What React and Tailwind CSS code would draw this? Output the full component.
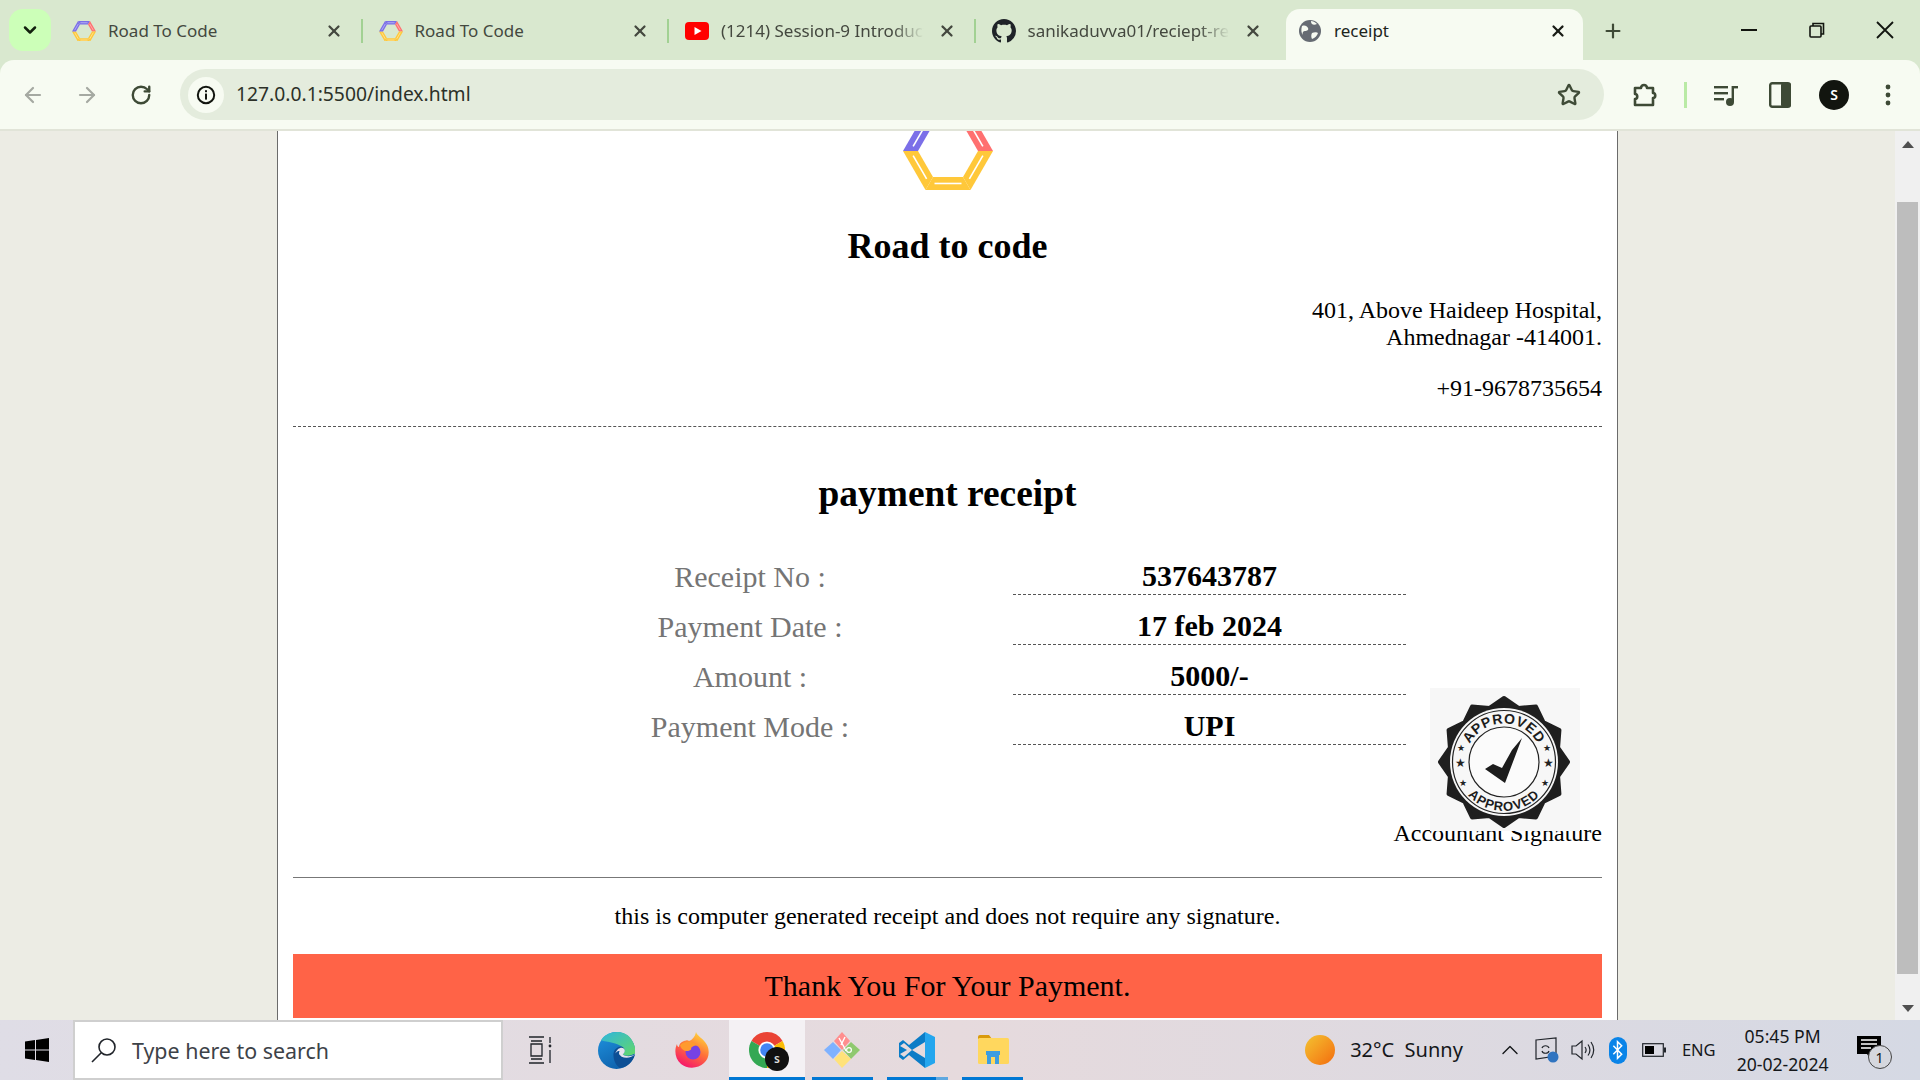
import { ArrowLeft, ArrowRight, RotateCw, Star, X, Plus, ChevronDown, ChevronUp } from 'lucide-react';

const UI = "font-['Noto_Sans',sans-serif]";

function HexLogo({ size = 90 }) {
  // flat-top hexagon split in six bars, with a thin white line in every bar
  const cx = 45, cy = 39, R = 45, r = 30, m = 37.5;
  const pt = (rad, i) => [cx + rad * Math.cos((i * Math.PI) / 3 - (2 * Math.PI) / 3), cy + rad * Math.sin((i * Math.PI) / 3 - (2 * Math.PI) / 3)];
  const colors = ['#7b6fe8', '#ff7070', '#ffc83a', '#ffc83a', '#ffc83a', '#7b6fe8'];
  return (
    <svg width={size} height={(size * 78) / 90} viewBox="0 0 90 78" className="block">
      {colors.map((c, i) => {
        const a = pt(R, i), b = pt(R, i + 1), d = pt(r, i), e = pt(r, i + 1);
        const l1 = pt(m, i), l2 = pt(m, i + 1);
        const t = 0.14;
        return (
          <g key={i}>
            <polygon points={`${a} ${b} ${e} ${d}`} fill={c} />
            <line
              x1={l1[0] + (l2[0] - l1[0]) * t}
              y1={l1[1] + (l2[1] - l1[1]) * t}
              x2={l2[0] - (l2[0] - l1[0]) * t}
              y2={l2[1] - (l2[1] - l1[1]) * t}
              stroke="#fff"
              strokeWidth="1.6"
            />
          </g>
        );
      })}
    </svg>
  );
}

function Youtube() {
  return (
    <svg width="24" height="24" viewBox="0 0 24 24">
      <rect x="0" y="3" width="24" height="18" rx="4" fill="#f00" />
      <polygon points="9.5,8 16.5,12 9.5,16" fill="#fff" />
    </svg>
  );
}

function Github() {
  return (
    <svg width="24" height="24" viewBox="0 0 16 16" fill="#1f2328">
      <path d="M8 0C3.58 0 0 3.58 0 8c0 3.54 2.29 6.53 5.47 7.59.4.07.55-.17.55-.38 0-.19-.01-.82-.01-1.49-2.01.37-2.53-.49-2.69-.94-.09-.23-.48-.94-.82-1.13-.28-.15-.68-.52-.01-.53.63-.01 1.08.58 1.23.82.72 1.21 1.87.87 2.33.66.07-.52.28-.87.51-1.07-1.78-.2-3.64-.89-3.64-3.95 0-.87.31-1.59.82-2.15-.08-.2-.36-1.02.08-2.12 0 0 .67-.21 2.2.82.64-.18 1.32-.27 2-.27s1.36.09 2 .27c1.53-1.04 2.2-.82 2.2-.82.44 1.1.16 1.92.08 2.12.51.56.82 1.27.82 2.15 0 3.07-1.87 3.75-3.65 3.95.29.25.54.73.54 1.48 0 1.07-.01 1.93-.01 2.2 0 .21.15.46.55.38A8 8 0 0 0 16 8c0-4.42-3.58-8-8-8z" />
    </svg>
  );
}

function Globe() {
  return (
    <svg width="22" height="22" viewBox="0 0 22 22">
      <circle cx="11" cy="11" r="11" fill="#666b73" />
      <path d="M3 6c3-1 5 0 6 2s-1 3-3 3-3 2-2 4c-2-2-2-6-1-9zM13 13c2-1 5-1 6 0-1 3-3 5-6 6-1-2-1-4 0-6zM12 1c2 0 4 1 6 3-2 1-4 1-5 0s-1-2-1-3z" fill="#f7fbf2" />
    </svg>
  );
}

const tabs = [
  { title: 'Road To Code', icon: <HexLogo size={24} />, first: true },
  { title: 'Road To Code', icon: <HexLogo size={24} /> },
  { title: '(1214) Session-9 Introduction to JavaScript', icon: <Youtube />, fade: true },
  { title: 'sanikaduvva01/reciept-receipt', icon: <Github />, fade: true },
];

function Tab({ title, icon, fade, first }) {
  return (
    <div className="relative flex h-[44px] w-[306.5px] items-center pl-[18px] pr-[18px]">
      {!first && <div className="absolute left-0 top-[10px] h-[24px] w-[2px] bg-[#a2d193]" />}
      <div className="flex w-[24px] justify-center">{icon}</div>
      <div
        className={`ml-[12px] min-w-0 flex-1 overflow-hidden whitespace-nowrap text-[17px] text-[#44483f] ${fade ? '[mask-image:linear-gradient(to_right,black_82%,transparent_97%)]' : ''}`}
      >
        {title}
      </div>
      <X size={18} strokeWidth={3} className="ml-[8px] shrink-0 text-[#44483f]" />
    </div>
  );
}

function TabStrip() {
  return (
    <div className={`flex h-[60px] items-start bg-[#d9e8cf] pl-[9px] pt-[9px] ${UI}`}>
      <div className="flex h-[42px] w-[42px] items-center justify-center rounded-[14px] bg-[#ccffb8]">
        <ChevronDown size={20} strokeWidth={3} className="text-[#12200e]" />
      </div>
      <div className="ml-[3px] flex">
        {tabs.map((t, i) => (
          <Tab key={i} {...t} />
        ))}
      </div>
      <div className="ml-[6px] h-[51px] w-[297px] rounded-t-[14px] bg-[#f7fbf2] pl-[13px] pr-[16px]">
        <div className="flex h-[44px] items-center">
          <Globe />
          <div className="ml-[13px] flex-1 text-[17px] text-[#20241c]">receipt</div>
          <X size={18} strokeWidth={3} className="text-[#191c16]" />
        </div>
      </div>
      <Plus size={22} strokeWidth={2.4} className="ml-[19px] mt-[11px] text-[#3e4a36]" />
      <div className="ml-auto flex h-[42px] items-center">
        <svg width="16" height="16" viewBox="0 0 16 16" className="mr-[52px]"><rect x="0" y="7" width="16" height="2" fill="#12150f" /></svg>
        <svg width="16" height="16" viewBox="0 0 16 16" fill="none" stroke="#12150f" strokeWidth="1.6" className="mr-[50px]">
          <rect x="1" y="4" width="11" height="11" rx="1" />
          <path d="M4 4V1.5h10.5V12H12" />
        </svg>
        <svg width="20" height="20" viewBox="0 0 20 20" stroke="#12150f" strokeWidth="1.8" className="mr-[25px]">
          <path d="M2 2l16 16M18 2L2 18" />
        </svg>
      </div>
    </div>
  );
}

function Toolbar() {
  return (
    <div className={`flex h-[71px] shrink-0 bg-[#d9e8cf] ${UI}`}>
      <div className="flex h-full w-full items-start rounded-t-[14px] border-b-2 border-[#e1e4d8] bg-[#f7fbf2] pt-[9px]">
        <div className="flex h-[51px] w-[180px] items-center">
          <ArrowLeft size={24} strokeWidth={2.2} className="ml-[21px] text-[#a5a9a2]" />
          <ArrowRight size={24} strokeWidth={2.2} className="ml-[30px] text-[#a5a9a2]" />
          <RotateCw size={22} strokeWidth={2.6} className="ml-[31px] text-[#3e4a36]" />
        </div>
        <div className="flex h-[51px] w-[1424px] items-center rounded-full bg-[#e4ecdd] pl-[8px] pr-[23px]">
          <div className="flex h-[36px] w-[36px] items-center justify-center rounded-full bg-[#f7fbf2]">
            <svg width="20" height="20" viewBox="0 0 20 20">
              <circle cx="10" cy="10" r="8.2" fill="none" stroke="#12150f" strokeWidth="2" />
              <rect x="9" y="8.6" width="2" height="6" fill="#12150f" />
              <rect x="9" y="5.2" width="2" height="2" fill="#12150f" />
            </svg>
          </div>
          <div className="ml-[12px] flex-1 text-[19.3px] text-[#2c3128]">127.0.0.1:5500/index.html</div>
          <Star size={24} strokeWidth={2.4} className="text-[#3e4a36]" />
        </div>
        <div className="flex h-[51px] flex-1 items-center text-[#3e4a36]">
          <svg width="24" height="26" viewBox="0 0 24 26" fill="none" stroke="#3e4a36" strokeWidth="2.6" strokeLinejoin="round" className="ml-[29px]">
            <path d="M2 6h6c0-4 6-4 6 0h6v5c3 0 3 5 0 5v7H2v-6c3 0 3-5 0-5z" />
          </svg>
          <div className="ml-[27px] h-[26px] w-[3px] bg-[#b9eaa5]" />
          <svg width="24" height="24" viewBox="0 0 24 24" fill="#3e4a36" className="ml-[27px]">
            <rect x="0" y="3" width="14" height="2.4" />
            <rect x="0" y="9" width="14" height="2.4" />
            <rect x="0" y="15" width="10" height="2.4" />
            <rect x="18" y="3" width="6" height="2.4" />
            <rect x="17.6" y="3" width="2.4" height="16" />
            <circle cx="16" cy="19" r="4" />
          </svg>
          <svg width="22" height="26" viewBox="0 0 22 26" className="ml-[31px]">
            <rect x="1.2" y="1.2" width="19.6" height="23.6" rx="2" fill="none" stroke="#3e4a36" strokeWidth="2.4" />
            <rect x="12" y="1" width="10" height="24" rx="2" fill="#3e4a36" />
          </svg>
          <div className="ml-[28px] flex h-[30px] w-[30px] items-center justify-center rounded-full bg-[#12150f] text-[14px] font-semibold text-white">S</div>
          <svg width="6" height="24" viewBox="0 0 6 24" fill="#3e4a36" className="ml-[36px]">
            <circle cx="3" cy="4" r="2.4" />
            <circle cx="3" cy="12" r="2.4" />
            <circle cx="3" cy="20" r="2.4" />
          </svg>
        </div>
      </div>
    </div>
  );
}

function Stamp() {
  const cx = 74, cy = 74;
  const lobes = 12;
  const scallop = Array.from({ length: lobes * 2 }, (_, i) => {
    const rad = i % 2 === 0 ? 64 : 56;
    const a = (i * Math.PI) / lobes - Math.PI / 2;
    return `${cx + rad * Math.cos(a)},${cy + rad * Math.sin(a)}`;
  }).join(' ');
  const stars = [[-43, -13, 6], [-44, 2, 9], [-41, 22, 6], [43, -13, 6], [44, 2, 9], [41, 22, 6]];
  return (
    <svg width="150" height="143" viewBox="0 0 150 143" className="block bg-[#f7f7f7] font-['Liberation_Sans',sans-serif]">
      <polygon points={scallop} fill="#1f1f1f" stroke="#1f1f1f" strokeWidth="4" strokeLinejoin="round" />
      <circle cx={cx} cy={cy} r="54" fill="#f7f7f7" />
      <circle cx={cx} cy={cy} r="51.5" fill="none" stroke="#222" strokeWidth="1.2" />
      <circle cx={cx} cy={cy} r="35" fill="#fbfbfb" stroke="#222" strokeWidth="1.2" />
      <path id="stamp-top" d="M 35.5 74 A 38.5 38.5 0 0 1 112.5 74" fill="none" />
      <path id="stamp-bottom" d="M 25 74 A 49 49 0 0 0 123 74" fill="none" />
      <text fontSize="14" fontWeight="700" fill="#1c1c1c" letterSpacing="0.6">
        <textPath href="#stamp-top" startOffset="50%" textAnchor="middle">APPROVED</textPath>
      </text>
      <text fontSize="13" fontWeight="700" fill="#1c1c1c" letterSpacing="1">
        <textPath href="#stamp-bottom" startOffset="50%" textAnchor="middle">APPROVED</textPath>
      </text>
      {stars.map(([dx, dy, s], i) => (
        <text key={i} x={cx + dx} y={cy + dy + s * 0.36} fontSize={s + 3} textAnchor="middle" fill="#222">★</text>
      ))}
      <polygon points="92,50 75,95 55,81 63,76 72,80 82,62" fill="#1c1c1c" />
    </svg>
  );
}

const rows = [
  ['Receipt No :', '537643787'],
  ['Payment Date :', '17 feb 2024'],
  ['Amount :', '5000/-'],
  ['Payment Mode :', 'UPI'],
];

function Receipt() {
  return (
    <div className="h-[889px] w-[1341px] shrink-0 overflow-hidden border-x border-[#6b6b6b] bg-white px-[15px] font-['Liberation_Serif',serif] text-black">
      <div className="-mt-[19px] flex justify-center">
        <HexLogo size={90} />
      </div>
      <h1 className="mt-[36px] text-center text-[36px] font-bold leading-[40px]">Road to code</h1>
      <div className="mt-[31px] text-right text-[24px] leading-[27px]">
        401, Above Haideep Hospital,<br />Ahmednagar -414001.
      </div>
      <div className="mt-[24px] text-right text-[24px] leading-[27px]">+91-9678735654</div>
      <div className="mt-[24px] border-t border-dashed border-[#555]" />
      <h2 className="mt-[44px] text-center text-[37.4px] font-bold leading-[46px]">payment receipt</h2>

      <div className="relative mt-[28px]">
        {rows.map(([label, value]) => (
          <div key={label} className="ml-[307px] flex h-[50px]">
            <div className="flex w-[300px] items-center justify-center pt-[12px] text-[30px] text-[#757575]">{label}</div>
            <div className="ml-[113px] flex w-[393px] items-center justify-center border-b border-dashed border-[#555] pt-[12px] text-[30px] font-bold">{value}</div>
          </div>
        ))}
        <div className="mt-[75px] text-right text-[24px] leading-[27px]">Accountant Signature</div>
        <div className="absolute right-[22px] top-[143px]">
          <Stamp />
        </div>
      </div>

      <div className="mt-[30px] border-t border-[#777]" />
      <div className="mt-[25px] text-center text-[24px] leading-[27px]">this is computer generated receipt and does not require any signature.</div>
      <div className="mt-[24px] flex h-[64px] items-center justify-center bg-[#ff6347] pb-[2px] text-[30px]">Thank You For Your Payment.</div>
    </div>
  );
}

function Scrollbar() {
  return (
    <div className="flex w-[25px] shrink-0 flex-col bg-[#f0f0f0]">
      <div className="flex h-[26px] items-center justify-center">
        <div className="h-0 w-0 border-x-[6px] border-b-[7px] border-x-transparent border-b-[#505050]" />
      </div>
      <div className="ml-[2px] mt-[45px] h-[772px] w-[21px] bg-[#bdbdbd]" />
      <div className="mt-auto flex h-[24px] items-center justify-center">
        <div className="h-0 w-0 border-x-[6px] border-t-[7px] border-x-transparent border-t-[#505050]" />
      </div>
    </div>
  );
}

function Edge() {
  return (
    <svg width="37" height="37" viewBox="0 0 36 36">
      <defs>
        <linearGradient id="edge-a" x1="0" y1="0" x2="0.5" y2="1"><stop offset="0" stopColor="#1f94e0" /><stop offset="1" stopColor="#0f62ad" /></linearGradient>
        <linearGradient id="edge-b" x1="0" y1="0" x2="1" y2="1"><stop offset="0" stopColor="#2fb6dc" /><stop offset="1" stopColor="#63d868" /></linearGradient>
      </defs>
      <circle cx="18" cy="18" r="18" fill="url(#edge-a)" />
      <path d="M3 8C9-2 27-3 33 8c3 5 4 10 3 13-3 2-9 3-12 1 2-2 2-5 0-7-5-5-15-5-21-7z" fill="url(#edge-b)" />
      <path d="M15 22c0-5 4-8 8-8 3 1 4 5 1 8 3 3 8 2 12 0-2 8-9 13-15 13-4-3-6-8-6-13z" fill="#0d4f95" />
      <path d="M17 21c1-5 6-7 8-5 2 2 1 4-1 6 3 2 8 2 12 0-3 3-9 4-13 2-3-2-3-4-2-5-1-1-3 0-4 2z" fill="#e6e3ec" />
    </svg>
  );
}

function Firefox() {
  return (
    <svg width="36" height="36" viewBox="0 0 36 36">
      <defs>
        <linearGradient id="ff-a" x1="0.8" y1="0" x2="0.3" y2="1"><stop offset="0" stopColor="#ffde3a" /><stop offset="0.5" stopColor="#ff7139" /><stop offset="1" stopColor="#f5156c" /></linearGradient>
      </defs>
      <path d="M22 0c1 4 7 6 11 13 3 6 2 14-3 18-6 6-17 6-23 1C1 27 0 18 3 12c0 2 1 3 2 3 0-3 2-5 5-6 3-1 4-1 5 0 3-1 6-4 7-9z" fill="url(#ff-a)" />
      <circle cx="19" cy="20" r="7.5" fill="#7542e5" />
      <path d="M6 13c5-5 14-4 19 1-4-1-6 0-8 2 1 1-1 3-4 3-3 0-6-2-7-6z" fill="#ff9a2e" />
    </svg>
  );
}

function Chrome() {
  const c = 18, R = 18;
  const p = (deg) => [c + R * Math.cos((deg * Math.PI) / 180), c + R * Math.sin((deg * Math.PI) / 180)];
  const arc = (a, b) => `M${c} ${c}L${p(a)}A${R} ${R} 0 0 1 ${p(b)}Z`;
  return (
    <div className="relative h-[36px] w-[36px]">
      <svg width="36" height="36" viewBox="0 0 36 36">
        <path d={arc(-150, -30)} fill="#ea4335" />
        <path d={arc(-30, 90)} fill="#fbbc04" />
        <path d={arc(90, 210)} fill="#34a853" />
        <circle cx="18" cy="18" r="8.6" fill="#fff" />
        <circle cx="18" cy="18" r="6.8" fill="#4285f4" />
      </svg>
      <div className={`absolute left-[16px] top-[15px] flex h-[24px] w-[24px] items-center justify-center rounded-full bg-[#111] text-[12px] font-semibold text-[#ddd] ${UI}`}>s</div>
    </div>
  );
}

function GitDiamonds() {
  return (
    <svg width="36" height="36" viewBox="0 0 36 36">
      <polygon points="18,0 26,9 18,18 10,9" fill="#ff8e8e" />
      <polygon points="27,10 36,18 27,27 19,18" fill="#8fc96f" />
      <polygon points="18,19 27,27 18,36 10,27" fill="#ffe27a" />
      <polygon points="9,10 17,18 9,27 0,18" fill="#7fb2ff" />
      <path d="M15 6l5 9 2 4M21 5l-4 8" stroke="#fff" strokeWidth="1.4" fill="none" />
      <circle cx="25" cy="18" r="2.4" fill="none" stroke="#fff" strokeWidth="1.2" />
    </svg>
  );
}

function VsCode() {
  return (
    <svg width="36" height="36" viewBox="0 0 36 36">
      <polygon points="26,0 36,5 36,31 26,36 26,10" fill="#24a6ee" />
      <polygon points="26,0 26,10 13,18 5,11 1,14 8,18 1,22 5,25 13,18 26,26 26,36 10,23 4,28 0,25 0,11 4,8 10,13" fill="#0a7cc7" />
    </svg>
  );
}

function Files() {
  return (
    <svg width="32" height="32" viewBox="0 0 32 32">
      <path d="M1 3a2 2 0 0 1 2-2h9l3 4H1z" fill="#d99a0c" />
      <rect x="1" y="4" width="31" height="26" rx="1.5" fill="#ffd75e" />
      <path d="M10 30V20a2 2 0 0 1 2-2h8a2 2 0 0 1 2 2v10h-4v-7h-4v7z" fill="#3d9de0" />
      <rect x="9" y="17" width="14" height="4" fill="#3d9de0" />
    </svg>
  );
}

const apps = [
  { icon: <Edge /> },
  { icon: <Firefox /> },
  { icon: <Chrome />, active: true },
  { icon: <GitDiamonds />, line: true },
  { icon: <VsCode />, line: true, split: true },
  { icon: <Files />, line: true },
];

function Taskbar() {
  return (
    <div className={`flex h-[60px] shrink-0 items-stretch bg-gradient-to-r from-[#dfdde6] via-[#e6dadd] to-[#d5d9e4] text-[#15171a] ${UI}`}>
      <div className="flex w-[73px] items-center justify-center">
        <svg width="24" height="24" viewBox="0 0 24 24" fill="#000">
          <path d="M0 3.4l10-1.4v9.4H0zM11 1.9L24 0v11.4H11zM0 12.6h10V22L0 20.6zM11 12.6h13V24l-13-1.9z" />
        </svg>
      </div>
      <div className="flex w-[430px] items-center border-2 border-[#cfcfcf] bg-white pl-[16px]">
        <svg width="26" height="26" viewBox="0 0 26 26" fill="none" stroke="#20242a" strokeWidth="1.6">
          <circle cx="16" cy="10" r="8" />
          <path d="M10 16L1 25" />
        </svg>
        <span className="ml-[15px] pt-[3px] text-[21.4px] text-[#3d4248]">Type here to search</span>
      </div>
      <div className="flex w-[76px] items-center justify-center pr-[3px]">
        <svg width="24" height="28" viewBox="0 0 24 28" fill="none" stroke="#20242a" strokeWidth="1.3">
          <path d="M1 1h15M3 5h11M3 8h11v12H3zM1 27h15M3 23h11" />
          <path d="M22 1v6M22 14v13" />
          <circle cx="22" cy="10" r="1.4" fill="#20242a" stroke="none" />
        </svg>
      </div>
      {apps.map((a, i) => (
        <div key={i} className={`relative flex w-[75.2px] items-center justify-center ${a.active ? 'bg-[#f4f1f4]' : ''}`}>
          {a.icon}
          {a.active && <div className="absolute bottom-0 left-0 h-[3px] w-full bg-[#0078d4]" />}
          {a.line && (
            <div className="absolute bottom-0 left-[7px] flex h-[3px] w-[61px]">
              <div className={`h-full bg-[#0078d4] ${a.split ? 'w-[49px]' : 'w-full'}`} />
              {a.split && <div className="h-full flex-1 bg-[#5fa8e0]" />}
            </div>
          )}
        </div>
      ))}
      <div className="flex flex-1 items-center">
        <div className="ml-[275px] h-[30px] w-[30px] rounded-full bg-gradient-to-br from-[#f2c230] to-[#f26a0c]" />
        <span className="ml-[15px] whitespace-pre text-[20px]">32°C  Sunny</span>
        <ChevronUp size={28} strokeWidth={1.2} className="ml-[33px]" />
        <svg width="26" height="26" viewBox="0 0 26 26" fill="none" stroke="#20242a" strokeWidth="1.2" className="ml-[10px]">
          <path d="M2 3l20-2v18l-20 3zM2 3v19" />
          <path d="M8 11c1-3 6-3 7 0M15 14c-1 3-6 3-7 0" />
          <circle cx="19" cy="20" r="5.5" fill="#3074c0" stroke="none" />
        </svg>
        <svg width="24" height="24" viewBox="0 0 24 24" fill="none" stroke="#20242a" strokeWidth="1.2" className="ml-[11px]">
          <path d="M1 8h4l6-5v18l-6-5H1z" />
          <path d="M14 9c1.5 2 1.5 4 0 6M17 6.5c2.4 3.4 2.4 7.6 0 11M20 4c3.4 5 3.4 11 0 16" />
        </svg>
        <div className="ml-[14px] flex h-[27px] w-[18px] items-center justify-center rounded-full bg-[#0a84e8]">
          <svg width="11" height="20" viewBox="0 0 12 24" fill="none" stroke="#fff" strokeWidth="1.8">
            <path d="M1 7l10 10-5 5V2l5 5L1 17" />
          </svg>
        </div>
        <svg width="24" height="14" viewBox="0 0 24 14" className="ml-[15px]">
          <rect x="0.7" y="0.7" width="20.6" height="12.6" fill="none" stroke="#20242a" strokeWidth="1.2" />
          <rect x="3" y="3" width="9" height="8" fill="#000" />
          <rect x="22" y="4.5" width="2" height="5" fill="#20242a" />
        </svg>
        <span className="ml-[16px] text-[16.5px]">ENG</span>
        <div className="ml-[15px] flex w-[104px] flex-col items-center text-[17.6px] leading-[28px]">
          <span>05:45 PM</span>
          <span className="whitespace-nowrap">20-02-2024</span>
        </div>
        <div className="relative ml-[22px] h-[32px] w-[26px]">
          <svg width="24" height="28" viewBox="0 0 24 28">
            <path d="M0 2h24v18h-8l-2 6-4-6H0z" fill="#000" />
            <path d="M4 6h16M4 10h16M4 14h10" stroke="#fff" strokeWidth="1.4" />
          </svg>
          <div className="absolute left-[11px] top-[11px] flex h-[24px] w-[24px] items-center justify-center rounded-full border border-[#444] bg-[#d5d7de] text-[14px] text-[#111]">1</div>
        </div>
      </div>
    </div>
  );
}

export default function App() {
  return (
    <div className="flex h-screen w-full flex-col overflow-hidden">
      <TabStrip />
      <Toolbar />
      <div className="flex min-h-0 flex-1">
        <div className="flex-1 bg-[#ecece4]" />
        <Receipt />
        <div className="w-[277px] bg-[#ecece4]" />
        <Scrollbar />
      </div>
      <Taskbar />
    </div>
  );
}
